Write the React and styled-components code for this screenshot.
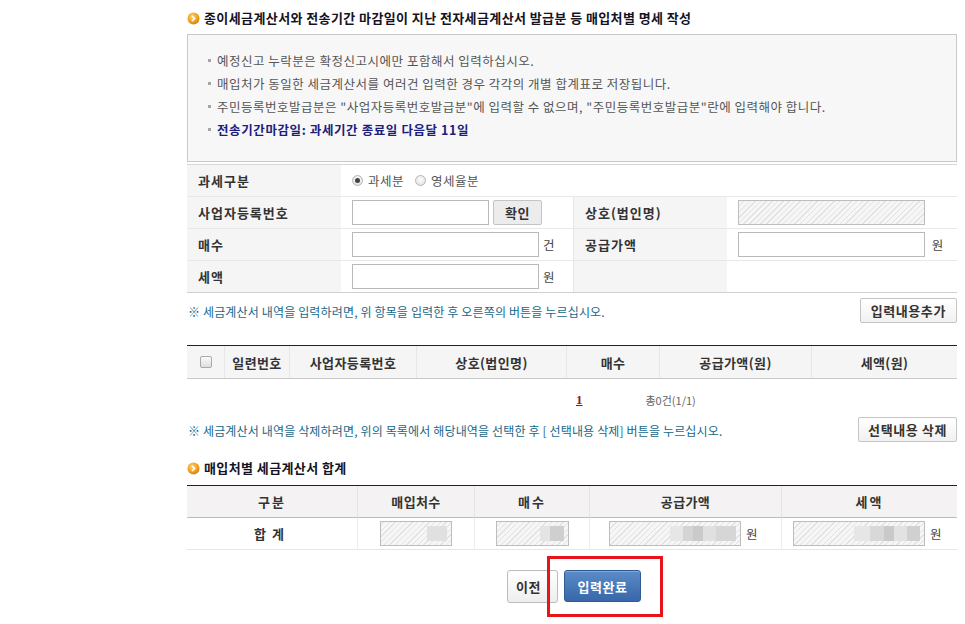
import React from "react";
import styled, { createGlobalStyle } from "styled-components";

const Global = createGlobalStyle`
  html, body { margin: 0; padding: 0; background: #fff; }
  body {
    font-family: "Noto Sans CJK KR", "Noto Sans", "Liberation Sans", sans-serif;
    font-size: 12px;
    color: #555;
  }
  * { box-sizing: border-box; }
`;

const Page = styled.div`
  width: 965px;
  min-height: 624px;
  padding-left: 187px;
  padding-bottom: 20px;
`;

const Content = styled.div`
  width: 770px;
`;

const SectionTitle = styled.h2`
  margin: ${(p) => p.$top || 10}px 0 ${(p) => p.$bottom || 8}px;
  display: flex;
  align-items: center;
  gap: 4px;
  height: 16px;
  font-size: 13px;
  line-height: 16px;
  font-weight: 700;
  color: #15131f;
  letter-spacing: 0.4px;
  white-space: nowrap;
`;

const InfoBox = styled.ul`
  margin: 0;
  list-style: none;
  height: 128px;
  border: 1px solid #c9c9c9;
  background: #f7f7f7;
  padding: 14px 0 0 20px;
`;

const InfoItem = styled.li`
  display: flex;
  align-items: center;
  height: 23px;
  line-height: 23px;
  font-size: 12.5px;
  color: ${(p) => (p.$strong ? "#1d1d7e" : "#555")};
  font-weight: ${(p) => (p.$strong ? 700 : 400)};
  letter-spacing: ${(p) => (p.$strong ? 0.6 : 0.5)}px;
  white-space: nowrap;
  &::before {
    content: "";
    width: 3px;
    height: 3px;
    background: #a5a5a5;
    margin-right: 6px;
    flex: none;
  }
`;

const FormGrid = styled.div`
  margin-top: 2px;
  display: grid;
  grid-template-columns: 154px 232px 154px 1fr;
  border-top: 1px solid #d6d6d6;
  border-bottom: 1px solid #cfcfcf;
`;

const Label = styled.div`
  height: ${(p) => (p.$last ? 31 : 32)}px;
  display: flex;
  align-items: center;
  padding-left: 11px;
  background: #f5f5f5;
  font-weight: 700;
  font-size: 13px;
  letter-spacing: 1px;
  color: #333;
  border-bottom: ${(p) => (p.$last ? "none" : "1px solid #e8e8e8")};
  border-left: ${(p) => (p.$divider ? "1px solid #e6e6e6" : "none")};
`;

const Value = styled.div`
  height: ${(p) => (p.$last ? 31 : 32)}px;
  display: flex;
  align-items: center;
  gap: 4px;
  padding-left: 11px;
  grid-column: span ${(p) => p.$span || 1};
  border-bottom: ${(p) => (p.$last ? "none" : "1px solid #e8e8e8")};
  font-size: 12.5px;
  color: #444;
`;

const TextInput = styled.input`
  width: ${(p) => p.$w}px;
  height: 25px;
  border: 1px solid #b9b9b9;
  background: #fff;
  padding: 0 4px;
  font: inherit;
  outline: none;
`;

const Hatched = styled.div`
  width: ${(p) => p.$w}px;
  height: 25px;
  border: 1px solid #bdbdbd;
  background: repeating-linear-gradient(
    -45deg,
    #f6f6f6 0px,
    #f6f6f6 3px,
    #e2e2e2 3px,
    #e2e2e2 4px
  );
  display: flex;
  align-items: center;
  justify-content: flex-end;
  padding-right: 4px;
`;

const Blur = styled.div`
  width: ${(p) => p.$w}px;
  height: 15px;
  background: ${(p) => p.$bg};
  filter: blur(0.6px);
`;

const SmallButton = styled.button`
  height: 25px;
  padding: 0 ${(p) => p.$pad || 8}px;
  border: 1px solid #c4c4c4;
  border-radius: 2px;
  background: ${(p) => (p.$gray ? "#ececec" : "linear-gradient(#ffffff, #f1f1f1)")};
  font-family: inherit;
  font-weight: 700;
  font-size: 13px;
  letter-spacing: 0.6px;
  color: #333;
  cursor: pointer;
  white-space: nowrap;
`;

const RadioGroup = styled.label`
  display: flex;
  align-items: center;
  gap: 5px;
  margin-right: 7px;
  color: #555;
  letter-spacing: 0.5px;
`;

const RadioDot = styled.span`
  width: 11px;
  height: 11px;
  border-radius: 50%;
  border: 1px solid #b5b5b5;
  background: radial-gradient(circle at 50% 40%, #fdfdfd, #dcdcdc);
  display: flex;
  align-items: center;
  justify-content: center;
  &::after {
    content: "";
    width: 5px;
    height: 5px;
    border-radius: 50%;
    background: ${(p) => (p.$on ? "#444" : "transparent")};
  }
`;

const NoteRow = styled.div`
  display: flex;
  align-items: center;
  justify-content: space-between;
  margin-top: ${(p) => p.$top}px;
  height: 25px;
`;

const Note = styled.p`
  margin: 2px 0 0 1px;
  color: #17688a;
  font-size: 12px;
  letter-spacing: 0.15px;
  white-space: nowrap;
`;

const ListHead = styled.div`
  margin-top: 22px;
  display: grid;
  grid-template-columns: 37px 65px 127px 150px 93px 152px 1fr;
  border-top: 1px solid #222;
  border-bottom: 1px solid #c9c9c9;
  background: #f5f5f5;
`;

const HeadCell = styled.div`
  height: 32px;
  display: flex;
  align-items: center;
  justify-content: center;
  font-weight: 700;
  font-size: 13px;
  letter-spacing: 0.4px;
  color: #333;
  border-left: ${(p) => (p.$first ? "none" : "1px solid #e7e7e7")};
`;

const CheckBox = styled.span`
  width: 12px;
  height: 12px;
  border: 1px solid #a9a9a9;
  border-radius: 2px;
  background: linear-gradient(#fafafa, #dedede);
`;

const Pager = styled.div`
  height: 38px;
  padding-top: 3px;
  display: flex;
  align-items: center;
  padding-left: 389px;
  gap: 63px;
`;

const PageNum = styled.a`
  font-family: "Liberation Serif", serif;
  font-weight: 700;
  font-size: 13px;
  color: #8c1c24;
  text-decoration: underline;
`;

const Count = styled.span`
  font-size: 11px;
  color: #666;
`;

const SumTable = styled.div`
  display: grid;
  grid-template-columns: 170px 117px 115px 192px 1fr;
  border-top: 1px solid #222;
`;

const SumHead = styled.div`
  height: 32px;
  display: flex;
  align-items: center;
  justify-content: center;
  background: #f4f2f2;
  border-bottom: 1px solid #bcbcbc;
  border-left: ${(p) => (p.$first ? "none" : "1px solid #e4e4e4")};
  font-weight: 700;
  font-size: 13px;
  color: #333;
  letter-spacing: ${(p) => p.$ls || 0.4}px;
`;

const SumCell = styled.div`
  height: 32px;
  display: flex;
  align-items: center;
  justify-content: ${(p) => (p.$left ? "flex-start" : "center")};
  padding-left: ${(p) => p.$pl || 0}px;
  gap: 5px;
  border-bottom: 1px solid #e6e6e6;
  border-left: ${(p) => (p.$first ? "none" : "1px solid #ededed")};
  font-weight: ${(p) => (p.$bold ? 700 : 400)};
  font-size: ${(p) => (p.$bold ? "13px" : "12.5px")};
  color: ${(p) => (p.$bold ? "#333" : "#444")};
  letter-spacing: ${(p) => p.$ls || 0}px;
`;

const ButtonRow = styled.div`
  position: relative;
  margin-top: 20px;
  display: flex;
  justify-content: center;
  gap: 6px;
  padding-left: 4px;
`;

const PrevButton = styled.button`
  width: 51px;
  height: 33px;
  border: 1px solid #bcbcbc;
  border-radius: 3px;
  background: linear-gradient(#ffffff, #eeeeee);
  font-family: inherit;
  font-weight: 700;
  font-size: 13px;
  letter-spacing: 0.5px;
  color: #333;
  padding: 0 8px 0 0;
`;

const DoneButton = styled.button`
  width: 77px;
  height: 32px;
  border: 1px solid #2f5b95;
  border-radius: 3px;
  background: linear-gradient(#5c8bc8, #3867aa);
  box-shadow: inset 0 1px 0 rgba(255, 255, 255, 0.25);
  font-family: inherit;
  font-weight: 700;
  font-size: 13px;
  letter-spacing: 0.5px;
  color: #fff;
`;

const Highlight = styled.div`
  position: absolute;
  left: 360px;
  top: -14px;
  width: 116px;
  height: 61px;
  border: 3px solid #e8141b;
  pointer-events: none;
`;

const TitleIcon = () => (
  <svg width="13" height="13" viewBox="0 0 13 13">
    <defs>
      <radialGradient id="og" cx="40%" cy="35%" r="70%">
        <stop offset="0%" stopColor="#ffd27a" />
        <stop offset="60%" stopColor="#f0a21e" />
        <stop offset="100%" stopColor="#cf7c06" />
      </radialGradient>
    </defs>
    <circle cx="6.5" cy="6.5" r="6" fill="url(#og)" />
    <path d="M5 4 L7.6 6.5 L5 9" stroke="#fff" strokeWidth="1.6" fill="none" />
  </svg>
);

export default function App() {
  return (
    <>
      <Global />
      <Page>
        <Content>
          <SectionTitle $top={10} $bottom={8}>
            <TitleIcon />
            종이세금계산서와 전송기간 마감일이 지난 전자세금계산서 발급분 등 매입처별 명세 작성
          </SectionTitle>

          <InfoBox>
            <InfoItem>예정신고 누락분은 확정신고시에만 포함해서 입력하십시오.</InfoItem>
            <InfoItem>매입처가 동일한 세금계산서를 여러건 입력한 경우 각각의 개별 합계표로 저장됩니다.</InfoItem>
            <InfoItem>
              주민등록번호발급분은 "사업자등록번호발급분"에 입력할 수 없으며, "주민등록번호발급분"란에 입력해야 합니다.
            </InfoItem>
            <InfoItem $strong>전송기간마감일: 과세기간 종료일 다음달 11일</InfoItem>
          </InfoBox>

          <FormGrid>
            <Label>과세구분</Label>
            <Value $span={3}>
              <RadioGroup>
                <RadioDot $on />
                과세분
              </RadioGroup>
              <RadioGroup>
                <RadioDot />
                영세율분
              </RadioGroup>
            </Value>

            <Label>사업자등록번호</Label>
            <Value>
              <TextInput $w={137} />
              <SmallButton $gray $pad={11}>확인</SmallButton>
            </Value>
            <Label $divider>상호(법인명)</Label>
            <Value>
              <Hatched $w={187} />
            </Value>

            <Label>매수</Label>
            <Value>
              <TextInput $w={187} />건
            </Value>
            <Label $divider>공급가액</Label>
            <Value>
              <TextInput $w={187} />
              &nbsp;원
            </Value>

            <Label $last>세액</Label>
            <Value $last>
              <TextInput $w={187} />원
            </Value>
            <Label $last $divider />
            <Value $last />
          </FormGrid>

          <NoteRow $top={5}>
            <Note>※ 세금계산서 내역을 입력하려면, 위 항목을 입력한 후 오른쪽의 버튼을 누르십시오.</Note>
            <SmallButton $pad={10}>입력내용추가</SmallButton>
          </NoteRow>

          <ListHead>
            <HeadCell $first>
              <CheckBox />
            </HeadCell>
            <HeadCell>일련번호</HeadCell>
            <HeadCell>사업자등록번호</HeadCell>
            <HeadCell>상호(법인명)</HeadCell>
            <HeadCell>매수</HeadCell>
            <HeadCell>공급가액(원)</HeadCell>
            <HeadCell>세액(원)</HeadCell>
          </ListHead>

          <Pager>
            <PageNum>1</PageNum>
            <Count>총0건(1/1)</Count>
          </Pager>

          <NoteRow $top={0}>
            <Note>※ 세금계산서 내역을 삭제하려면, 위의 목록에서 해당내역을 선택한 후 [ 선택내용 삭제] 버튼을 누르십시오.</Note>
            <SmallButton $pad={9}>선택내용 삭제</SmallButton>
          </NoteRow>

          <SectionTitle $top={18} $bottom={9}>
            <TitleIcon />
            매입처별 세금계산서 합계
          </SectionTitle>

          <SumTable>
            <SumHead $first $ls={2}>구분</SumHead>
            <SumHead>매입처수</SumHead>
            <SumHead $ls={2}>매수</SumHead>
            <SumHead>공급가액</SumHead>
            <SumHead $ls={2}>세액</SumHead>

            <SumCell $first $bold $ls={6}>합계</SumCell>
            <SumCell>
              <Hatched $w={72}>
                <Blur $w={20} $bg="#e0e0e0" />
              </Hatched>
            </SumCell>
            <SumCell>
              <Hatched $w={73}>
                <Blur $w={24} $bg="linear-gradient(90deg,#e4e4e4 0 40%,#cfcfcf 40% 100%)" />
              </Hatched>
            </SumCell>
            <SumCell $left $pl={19}>
              <Hatched $w={132}>
                <Blur
                  $w={66}
                  $bg="linear-gradient(90deg,#e6e6e6 0 20%,#d4d4d4 20% 35%,#cacaca 35% 50%,#e0e0e0 50% 70%,#d6d6d6 70% 100%)"
                />
              </Hatched>
              원
            </SumCell>
            <SumCell $left $pl={11}>
              <Hatched $w={132}>
                <Blur
                  $w={66}
                  $bg="linear-gradient(90deg,#e6e6e6 0 25%,#d8d8d8 25% 45%,#c9c9c9 45% 60%,#e2e2e2 60% 80%,#d0d0d0 80% 100%)"
                />
              </Hatched>
              원
            </SumCell>
          </SumTable>

          <ButtonRow>
            <PrevButton>이전</PrevButton>
            <DoneButton>입력완료</DoneButton>
            <Highlight />
          </ButtonRow>
        </Content>
      </Page>
    </>
  );
}
